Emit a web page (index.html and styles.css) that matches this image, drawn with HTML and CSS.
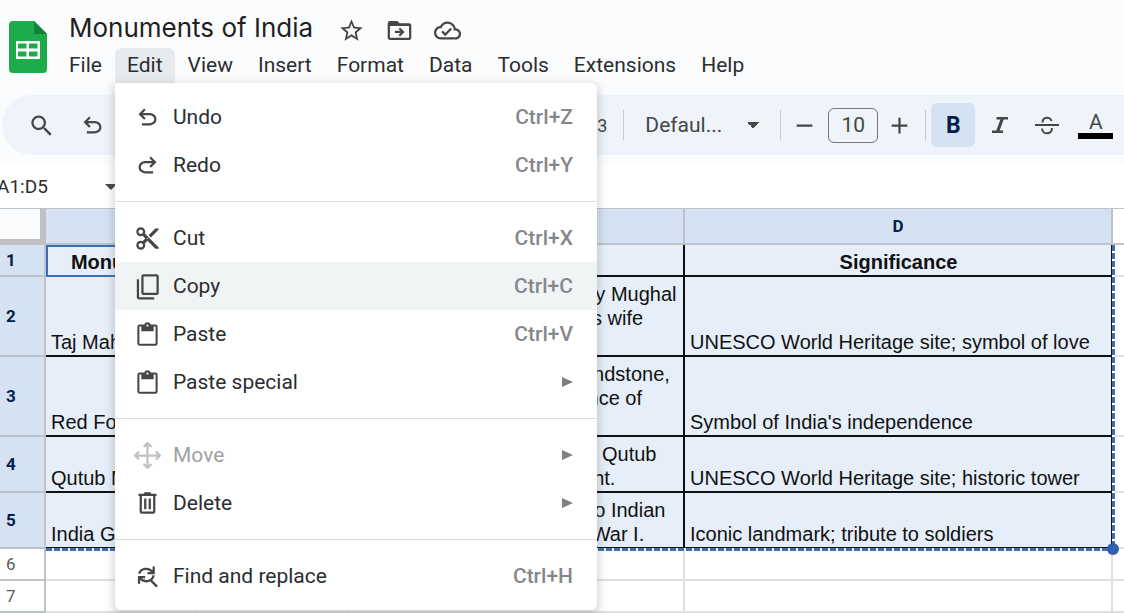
FILE: index.html
```html
<!DOCTYPE html>
<html lang="en">
  <head>
    <meta charset="utf-8">
    <title>Monuments of India</title>
    <link rel="stylesheet" href="styles.css">
  </head>
  <body>
    <!-- shared icons -->
    <svg class="defs" aria-hidden="true">
      <symbol id="i-undo" viewBox="0 -960 960 960"><path d="M280-200v-80h284q63 0 109.500-40T720-420q0-60-46.500-100T564-560H312l104 104-56 56-200-200 200-200 56 56-104 104h252q97 0 166.500 63T800-420q0 94-69.500 157T564-200H280Z"/></symbol>
      <symbol id="i-paste" viewBox="0 0 24 24"><path fill-rule="evenodd" d="M19 3h-4.200C14.400 1.800 13.300 1 12 1s-2.400.8-2.800 2H5a2 2 0 0 0-2 2v15c0 1.100.9 2 2 2h14a2 2 0 0 0 2-2V5a2 2 0 0 0-2-2zm-7 0a1 1 0 1 1 0 2 1 1 0 0 1 0-2zm7.200 17.200H4.800V4.800H6.500V9h11V4.800h1.700z"/></symbol>
    </svg>

    <header id="header">
      <svg class="logo" viewBox="0 0 38 52" aria-label="Sheets">
        <path fill="#1eab4b" d="M4 0h21l13 13v35a4 4 0 0 1-4 4H4a4 4 0 0 1-4-4V4a4 4 0 0 1 4-4z"/>
        <path fill="#11823a" d="M25 0l13 13H25z"/>
        <path fill="#fff" fill-rule="evenodd" d="M7 20h24v18H7zM9 22.500v5h8.500v-5zM20 22.500v5h8.500v-5zM9 30.500v5h8.500v-5zM20 30.500v5h8.500v-5z"/>
      </svg>
      <div class="heading">
        <div class="title">
          <h1>Monuments of India</h1>
          <button class="plain" aria-label="Star"><svg class="icon" viewBox="0 0 24 24"><path d="M22 9.240l-7.190-.62L12 2 9.190 8.630 2 9.240l5.460 4.730L5.820 21 12 17.270 18.180 21l-1.630-7.030L22 9.240zM12 15.400l-3.760 2.270 1-4.280-3.320-2.880 4.380-.38L12 6.100l1.710 4.040 4.380.38-3.320 2.880 1 4.280L12 15.400z"/></svg></button>
          <button class="plain" aria-label="Move to folder"><svg class="icon" viewBox="0 0 24 24"><path fill-rule="evenodd" d="M20.500 5.500H12l-2-2H3.500A2 2 0 0 0 1.500 5.500v13c0 1.100.9 2 2 2h17a2 2 0 0 0 2-2v-11a2 2 0 0 0-2-2zm0 13h-17V8h17zM12.500 9.300l4 4-4 4-1.300-1.300 1.700-1.700H8v-2h4.900l-1.700-1.700z"/></svg></button>
          <button class="plain" aria-label="Saved to Drive"><svg class="icon" viewBox="0 0 24 24"><path d="M19.350 10.040C18.670 6.590 15.640 4 12 4 9.110 4 6.610 5.640 5.360 8.040 2.340 8.360 0 10.910 0 14c0 3.310 2.690 6 6 6h13c2.760 0 5-2.240 5-5 0-2.640-2.050-4.780-4.650-4.960zM19 18H6c-2.210 0-4-1.790-4-4s1.790-4 4-4h.71C7.370 7.690 9.480 6 12 6c3.040 0 5.500 2.460 5.500 5.500v.5H19c1.660 0 3 1.340 3 3s-1.340 3-3 3zm-9-3.820l-2.090-2.090L6.500 13.500 10 17l6.010-6.010-1.410-1.410z"/></svg></button>
        </div>
        <nav class="menubar">
          <button>File</button>
          <div class="menu">
            <button class="open" aria-expanded="true">Edit</button>
            <div class="dropdown">
              <button><svg class="icon"><use href="#i-undo"/></svg>Undo<kbd>Ctrl+Z</kbd></button>
              <button><svg class="icon flip"><use href="#i-undo"/></svg>Redo<kbd>Ctrl+Y</kbd></button>
              <hr>
              <button><svg class="icon" viewBox="0 0 24 24"><path d="M9.640 7.640c.23-.5.360-1.050.360-1.640 0-2.210-1.790-4-4-4S2 3.790 2 6s1.790 4 4 4c.59 0 1.140-.13 1.640-.36L10 12l-2.360 2.360C7.140 14.130 6.590 14 6 14c-2.210 0-4 1.790-4 4s1.790 4 4 4 4-1.790 4-4c0-.59-.13-1.140-.36-1.640L12 14l7 7h3v-1L9.640 7.640zM6 8c-1.100 0-2-.89-2-2s.9-2 2-2 2 .89 2 2-.9 2-2 2zm0 12c-1.100 0-2-.89-2-2s.9-2 2-2 2 .89 2 2-.9 2-2 2zm6-7.500c-.28 0-.5-.22-.5-.5s.22-.5.5-.5.5.22.5.5-.22.5-.5.5zM19 3l-6 6 2 2 7-7V3z"/></svg>Cut<kbd>Ctrl+X</kbd></button>
              <button class="hover"><svg class="icon" viewBox="0 0 24 24"><path fill-rule="evenodd" d="M8.500 1H20a2 2 0 0 1 2 2v14.500a2 2 0 0 1-2 2H8.500a2 2 0 0 1-2-2V3a2 2 0 0 1 2-2zm0 2v14.500H20V3zM2.500 5.500h2v16H18v2H4.500a2 2 0 0 1-2-2z"/></svg>Copy<kbd>Ctrl+C</kbd></button>
              <button><svg class="icon"><use href="#i-paste"/></svg>Paste<kbd>Ctrl+V</kbd></button>
              <button><svg class="icon"><use href="#i-paste"/></svg>Paste special<span class="more"></span></button>
              <hr>
              <button disabled><svg class="icon line" viewBox="0 0 24 24"><path d="M12 1.500v21M1.500 12h21M8.500 4.500L12 1l3.500 3.500M8.500 19.500L12 23l3.500-3.500M4.500 8.500L1 12l3.500 3.500M19.500 8.500L23 12l-3.500 3.500"/></svg>Move<span class="more"></span></button>
              <button><svg class="icon" viewBox="0 0 24 24"><path fill-rule="evenodd" d="M9 2h6v1.300h5v2h-1V19a2 2 0 0 1-2 2H7a2 2 0 0 1-2-2V5.300H4v-2h5zM7 5.300V19h10V5.300zM9 7.500h2v9.500H9zM13 7.500h2v9.500h-2z"/></svg>Delete<span class="more"></span></button>
              <hr>
              <button><svg class="icon line" viewBox="0 0 24 24"><path d="M4.500 9.500C6 5 12.500 3 17 8.500M17.500 3v6H12M4.500 18.500v-6H10M5 13c3.500 5 11 4 12.500-2M14.500 15l6 6"/></svg>Find and replace<kbd>Ctrl+H</kbd></button>
            </div>
          </div>
          <button>View</button>
          <button>Insert</button>
          <button>Format</button>
          <button>Data</button>
          <button>Tools</button>
          <button>Extensions</button>
          <button>Help</button>
        </nav>
      </div>
    </header>

    <div id="toolbar">
      <button class="plain" aria-label="Search the menus"><svg class="icon" viewBox="0 0 24 24"><path d="M15.500 14h-.79l-.28-.27C15.410 12.590 16 11.110 16 9.500 16 5.910 13.090 3 9.500 3S3 5.910 3 9.500 5.910 16 9.500 16c1.610 0 3.090-.59 4.230-1.570l.27.28v.79l5.500 5.500L21 19.500l-5.500-5.500zM9.500 14C7 14 5 12 5 9.500S7 5 9.500 5 14 7 14 9.500 12 14 9.500 14z"/></svg></button>
      <button class="plain undo" aria-label="Undo"><svg class="icon"><use href="#i-undo"/></svg></button>
      <button class="formats" aria-label="More formats">123</button>
      <span class="sep"></span>
      <select class="font" aria-label="Font"><option>Defaul...</option></select>
      <span class="sep"></span>
      <button class="plain step" aria-label="Decrease font size"><svg class="icon" viewBox="0 0 24 24"><path d="M5 11h14v2H5z"/></svg></button>
      <input class="size" aria-label="Font size" value="10">
      <button class="plain step" aria-label="Increase font size"><svg class="icon" viewBox="0 0 24 24"><path d="M5 11h6V5h2v6h6v2h-6v6h-2v-6H5z"/></svg></button>
      <span class="sep"></span>
      <button class="tool on" aria-label="Bold">B</button>
      <button class="tool" aria-label="Italic"><svg class="icon" viewBox="0 0 24 24"><path d="M8.500 4H20v2.500h-4.300L11.600 17.500H15V20H4v-2.500h4.300L12.400 6.500H8.500z"/></svg></button>
      <button class="tool" aria-label="Strikethrough"><svg class="icon line" viewBox="0 0 24 24"><path d="M0 12h24M7.500 9.500C7.500 3.500 16 3.500 16.500 8M7 15.500c.5 6.500 10 6.500 10-.5"/></svg></button>
      <button class="tool color" aria-label="Text color">A</button>
    </div>

    <div id="formula">
      <input class="range" aria-label="Name box" value="A1:D5">
      <span class="caret"></span>
    </div>

    <main id="sheet">
      <table>
        <colgroup>
          <col class="c-head"><col class="c-a"><col class="c-b"><col class="c-c"><col class="c-d"><col>
        </colgroup>
        <thead>
          <tr><td class="corner"></td><th class="sel">A</th><th class="sel">B</th><th class="sel">C</th><th class="sel">D</th><th></th></tr>
        </thead>
        <tbody class="data">
          <tr class="labels"><th>1</th><td class="active">Monument</td><td></td><td>Description</td><td>Significance</td><td></td></tr>
          <tr class="three"><th>2</th><td>Taj Mahal</td><td></td><td>Marble mausoleum made by Mughal Emperor Shah Jahan for his wife Mumtaz Mahal.</td><td>UNESCO World Heritage site; symbol of love</td><td></td></tr>
          <tr class="three"><th>3</th><td>Red Fort</td><td></td><td>Historic fort made of red sandstone, once the main royal residence of Mughal emperors.</td><td>Symbol of India's independence</td><td></td></tr>
          <tr class="two"><th>4</th><td>Qutub Minar</td><td></td><td>Brick minaret started by the Qutub line, over 73 metres in height.</td><td>UNESCO World Heritage site; historic tower</td><td></td></tr>
          <tr class="two"><th>5</th><td>India Gate</td><td></td><td>A war memorial dedicated to Indian soldiers who died in World War I.</td><td>Iconic landmark; tribute to soldiers</td><td></td></tr>
        </tbody>
        <tbody>
          <tr><th>6</th><td></td><td></td><td></td><td></td><td></td></tr>
          <tr><th>7</th><td></td><td></td><td></td><td></td><td></td></tr>
        </tbody>
      </table>
      <div class="ants"><span class="handle"></span></div>
    </main>
  </body>
</html>
```
FILE: styles.css
```css
* {
  box-sizing: border-box;
}

body {
  margin: 0;
  overflow-x: hidden;
  background-color: #fbfcfe;
  font-family: Roboto, "Liberation Sans", sans-serif;
  font-size: 21px;
  color: #2b2d30;
}

button, input, select {
  margin: 0;
  padding: 0;
  border: 0;
  background: none;
  font: inherit;
  color: inherit;
}

.defs {
  position: absolute;
  width: 0;
  height: 0;
}

.icon {
  display: block;
  flex: none;
  width: 27px;
  height: 27px;
  fill: #444746;
}

.line {
  fill: none;
  stroke: #444746;
  stroke-width: 2;
}

.flip {
  transform: scaleX(-1);
}

.plain {
  display: flex;
  align-items: center;
  justify-content: center;
}

/* title and menus */

#header {
  display: flex;
  gap: 10px;
  padding-left: 9px;
}

.logo {
  flex: none;
  width: 38px;
  height: 52px;
  margin-top: 21px;
}

.title {
  display: flex;
  align-items: center;
  gap: 21px;
  height: 48px;
  padding: 12px 0 0 12px;
}

.title h1 {
  margin: 0 4px 4px 0;
  font-family: Inter, Roboto, sans-serif;
  font-size: 26px;
  font-weight: 400;
  line-height: 32px;
  white-space: nowrap;
  color: #1f1f1f;
}

.menubar {
  display: flex;
  gap: 1px;
}

.menu {
  position: relative;
}

.menubar > button, .open {
  height: 35px;
  padding: 0 12px 2px;
}

.open {
  display: block;
  border-radius: 6px 6px 0 0;
  background-color: #e8ebee;
}

.dropdown {
  position: absolute;
  z-index: 2;
  top: 100%;
  left: 0;
  width: 482px;
  padding: 10px 0;
  border-radius: 0 6px 6px 6px;
  background-color: #fff;
  box-shadow: 0 3px 9px 2px rgba(60, 64, 67, .22);
}

.dropdown button {
  display: flex;
  align-items: center;
  width: 100%;
  height: 48px;
  padding: 0 24px 0 19px;
  text-align: left;
}

.dropdown .icon {
  margin-right: 12px;
}

.dropdown .hover {
  background-color: #f1f4f5;
}

.dropdown button:disabled {
  color: #9fa1a3;
}

.dropdown button:disabled .icon {
  stroke: #bfc1c2;
}

.dropdown hr {
  height: 1px;
  margin: 12px 0;
  border: 0;
  background-color: #dadce0;
}

kbd, .more {
  margin-left: auto;
}

kbd {
  font-family: inherit;
  font-weight: 500;
  color: #85888b;
}

.more {
  border-left: 11px solid #7d8083;
  border-top: 5px solid transparent;
  border-bottom: 5px solid transparent;
}

/* toolbar */

#toolbar {
  display: flex;
  align-items: center;
  height: 60px;
  margin: 12px 0 10px 2px;
  padding-left: 26px;
  border-radius: 30px 0 0 30px;
  background-color: #eff3fa;
  color: #444746;
  overflow: hidden;
}

#toolbar > * {
  flex: none;
}

.undo {
  margin-left: 24px;
}

.formats {
  margin-left: 471px;
  font-size: 18px;
}

.sep {
  width: 1px;
  height: 30px;
  margin-left: 16px;
  background-color: #c7cacd;
}

.font {
  width: 116px;
  height: 36px;
  margin: 0 19px 0 21px;
  appearance: none;
  background-image: conic-gradient(from -45deg at 50% 100%, #444746 90deg, transparent 0);
  background-image: linear-gradient(to bottom left, #444746 50%, transparent 50%), linear-gradient(to bottom right, #444746 50%, transparent 50%);
  background-repeat: no-repeat;
  background-position: right 8px center, right 2px center;
  background-size: 6px 6px;
}

.font + .sep {
  margin-left: 0;
}

.step {
  width: 27px;
  margin: 0 10px;
}

.size {
  width: 50px;
  height: 35px;
  border: 1px solid #747775;
  border-radius: 6px;
  text-align: center;
}

.size + .step {
  margin: 0 8px;
}

.step + .sep {
  margin-left: 4px;
}

.tool {
  display: flex;
  align-items: center;
  justify-content: center;
  width: 44px;
  height: 44px;
  margin-right: 3px;
  border-radius: 6px;
}

.sep + .tool {
  margin-left: 5px;
}

.on {
  background-color: #d5e2f3;
  color: #041e49;
  font-size: 23px;
  font-weight: 700;
}

.tool .icon {
  width: 24px;
  height: 24px;
}

.color {
  width: 35px;
  height: 28px;
  margin-left: 6px;
  border-bottom: 6px solid #000;
  border-radius: 0;
}

/* name box */

#formula {
  display: flex;
  align-items: center;
  height: 43px;
  background-color: #fff;
}

.range {
  width: 105px;
  height: 30px;
  font-size: 19px;
  text-indent: -3px;
}

.caret {
  border-top: 6px solid #444746;
  border-left: 6px solid transparent;
  border-right: 6px solid transparent;
}

/* grid */

#sheet {
  position: relative;
  border-top: 1px solid #c0c3c6;
  background-color: #fff;
  overflow: hidden;
}

table {
  width: 100%;
  table-layout: fixed;
  border-collapse: separate;
  border-spacing: 0;
}

.c-head {
  width: 46px;
}

.c-a {
  width: 152px;
}

.c-b {
  width: 150px;
}

.c-c {
  width: 337px;
}

.c-d {
  width: 428px;
}

th, td {
  height: 32px;
  padding: 0;
  border: solid #dfdfdf;
  border-width: 0 2px 2px 0;
}

tr > :last-child {
  border-right: 0;
}

thead th, thead td {
  height: 36px;
  border-color: #bfc3c8;
  font-size: 17px;
}

thead .sel {
  background-color: #d5e2f3;
  color: #041e49;
}

thead .corner {
  border: solid #c0c0c0;
  border-width: 0 6px 6px 0;
  background-color: #fbfcfe;
}

tbody th {
  padding-left: 6px;
  border-color: #c0c3c6;
  font-size: 17px;
  font-weight: 400;
  text-align: left;
  color: #575b5f;
}

.data th {
  background-color: #d5e2f3;
  font-weight: 700;
  color: #041e49;
}

.data td {
  padding: 0 4px 1px 5px;
  border-color: #111;
  background-color: #e6eff9;
  font-family: "Liberation Sans", Arial, sans-serif;
  font-size: 20px;
  line-height: 24px;
  vertical-align: bottom;
  color: #111;
}

.data td:last-child {
  border-color: #dfdfdf;
  background-color: #fff;
}

.data .active {
  position: relative;
}

.labels td {
  font-weight: 700;
  text-align: center;
}

.three td {
  height: 80px;
}

.two td {
  height: 56px;
}

.active::after {
  content: "";
  position: absolute;
  inset: 0 -2px -2px 0;
  border: 2px solid #3d6fb5;
}

/* copied range outline, drawn over the grid lines */
.ants {
  position: absolute;
  top: 36px;
  left: 46px;
  width: 1069px;
  height: 306px;
  background-image:
    repeating-linear-gradient(to right, #416fb3 0 6px, #fff 6px 8px),
    repeating-linear-gradient(to bottom, #416fb3 0 6px, #fff 6px 8px);
  background-repeat: no-repeat;
  background-position: left bottom, right top;
  background-size: 100% 3px, 3px 100%;
}

.handle {
  position: absolute;
  right: -4px;
  bottom: -4px;
  width: 12px;
  height: 12px;
  border-radius: 50%;
  background-color: #2f5fb3;
}
```
